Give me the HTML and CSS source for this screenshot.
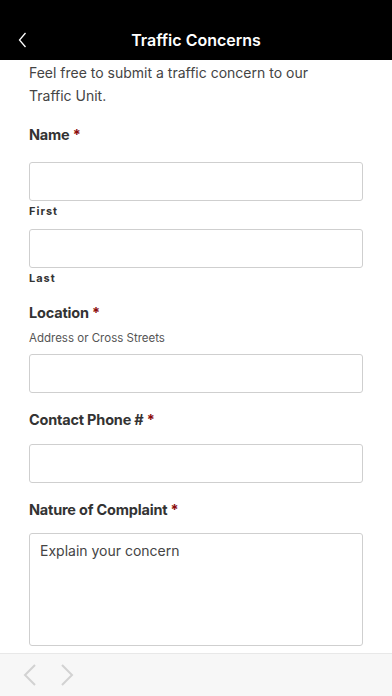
FILE: index.html
```html
<!DOCTYPE html>
<html>
<head>
  <meta charset="utf-8">
  <title>Traffic Concerns</title>
  <link rel="stylesheet" href="styles.css">
</head>
<body>
  <div class="screen">
    <div class="topbar">
      <svg class="back" width="10" height="16" viewBox="0 0 10 16">
        <path d="M8.5 1 L2.5 8 L8.5 15" fill="none" stroke="#fff" stroke-width="1.3"/>
      </svg>
      <h1>Traffic Concerns</h1>
    </div>

    <div class="content">
      <p class="intro">Feel free to submit a traffic concern to our Traffic Unit.</p>

      <div class="field field-name">
        <label class="label">Name <span class="req">*</span></label>
        <input type="text" class="input">
        <span class="sublabel">First</span>
        <input type="text" class="input input-last">
        <span class="sublabel">Last</span>
      </div>

      <div class="field field-location">
        <label class="label">Location <span class="req">*</span></label>
        <span class="hint">Address or Cross Streets</span>
        <input type="text" class="input">
      </div>

      <div class="field field-phone">
        <label class="label">Contact Phone # <span class="req">*</span></label>
        <input type="text" class="input">
      </div>

      <div class="field field-complaint">
        <label class="label">Nature of Complaint <span class="req">*</span></label>
        <textarea class="textarea" placeholder="Explain your concern"></textarea>
      </div>
    </div>

    <div class="toolbar">
      <svg width="14" height="22" viewBox="0 0 14 22">
        <path d="M12 1 L2 11 L12 21" fill="none" stroke="#d2d2d2" stroke-width="2"/>
      </svg>
      <svg width="14" height="22" viewBox="0 0 14 22">
        <path d="M2 1 L12 11 L2 21" fill="none" stroke="#d2d2d2" stroke-width="2"/>
      </svg>
    </div>
  </div>
</body>
</html>
```

FILE: styles.css
```css
html, body {
  margin: 0;
  padding: 0;
  background: #ffffff;
}

body {
  font-family: Inter, "Liberation Sans", sans-serif;
  color: #333;
}

.screen {
  display: flex;
  flex-direction: column;
  height: 100vh;
  overflow: hidden;
}

.topbar {
  flex: 0 0 60px;
  background: #000;
  display: flex;
  align-items: center;
  justify-content: center;
  position: relative;
  padding-top: 20px;
  box-sizing: border-box;
}

.topbar h1 {
  margin: 0;
  font-size: 16px;
  font-weight: 600;
  color: #fff;
}

.back {
  position: absolute;
  left: 17px;
  top: 32px;
}

.content {
  flex: 1;
  overflow: hidden;
  padding: 0 29px;
}

.intro {
  margin: 1px 0 0;
  max-width: 300px;
  font-size: 14px;
  line-height: 23px;
  color: #444;
}

.field {
  display: flex;
  flex-direction: column;
}

.label {
  font-size: 14.5px;
  line-height: 20px;
  font-weight: 700;
  color: #333;
  letter-spacing: -0.2px;
}

.req {
  color: #8b0a0a;
}

.field-name { margin-top: 18px; }
.field-location { margin-top: 18px; }
.field-phone { margin-top: 17px; }
.field-complaint { margin-top: 17px; }

.field-name .input { margin-top: 17px; }
.field-name .input-last { margin-top: 11px; }
.field-phone .input { margin-top: 14px; }

.input {
  height: 39px;
  border: 1px solid #cfcfcf;
  border-radius: 3px;
  box-sizing: border-box;
  width: 100%;
  font-size: 15px;
  background: #fff;
}

.sublabel {
  margin-top: 3px;
  font-size: 11px;
  line-height: 14px;
  font-weight: 700;
  letter-spacing: 1px;
  color: #333;
}

.hint {
  margin-top: 7px;
  font-size: 11.5px;
  line-height: 16px;
  color: #555;
}

.field-location .input { margin-top: 8px; }

.textarea {
  margin-top: 13px;
  height: 113px;
  border: 1px solid #cfcfcf;
  border-radius: 3px;
  box-sizing: border-box;
  width: 100%;
  padding: 8px 10px;
  font-family: Inter, "Liberation Sans", sans-serif;
  font-size: 14px;
  resize: none;
}

.textarea::placeholder {
  color: #444;
}

.toolbar {
  flex: 0 0 43px;
  background: #f7f7f7;
  border-top: 1px solid #e8e8e8;
  box-sizing: border-box;
  display: flex;
  align-items: center;
  gap: 23px;
  padding-left: 23px;
}
```
